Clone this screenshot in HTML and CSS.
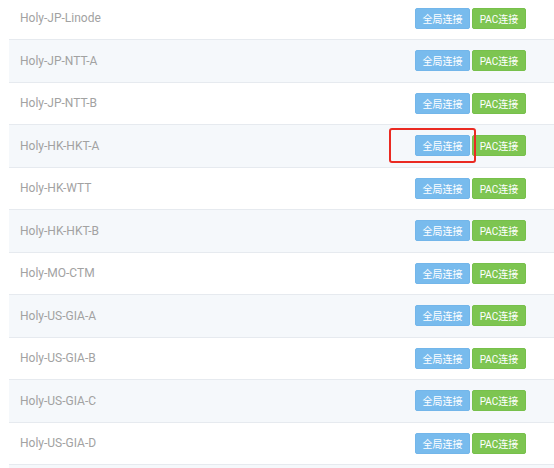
FILE: index.html
```html
<!DOCTYPE html>
<html>
<head>
<meta charset="utf-8">
<link rel="stylesheet" href="styles.css">
</head>
<body>
<div class="table">
  <div class="row"><span class="name">Holy-JP-Linode</span><span class="actions"><a class="btn btn-global">全局连接</a><a class="btn btn-pac">PAC连接</a></span></div>
  <div class="row"><span class="name">Holy-JP-NTT-A</span><span class="actions"><a class="btn btn-global">全局连接</a><a class="btn btn-pac">PAC连接</a></span></div>
  <div class="row"><span class="name">Holy-JP-NTT-B</span><span class="actions"><a class="btn btn-global">全局连接</a><a class="btn btn-pac">PAC连接</a></span></div>
  <div class="row"><span class="name">Holy-HK-HKT-A</span><span class="actions"><span class="mark"></span><a class="btn btn-global">全局连接</a><a class="btn btn-pac">PAC连接</a></span></div>
  <div class="row"><span class="name">Holy-HK-WTT</span><span class="actions"><a class="btn btn-global">全局连接</a><a class="btn btn-pac">PAC连接</a></span></div>
  <div class="row"><span class="name">Holy-HK-HKT-B</span><span class="actions"><a class="btn btn-global">全局连接</a><a class="btn btn-pac">PAC连接</a></span></div>
  <div class="row"><span class="name">Holy-MO-CTM</span><span class="actions"><a class="btn btn-global">全局连接</a><a class="btn btn-pac">PAC连接</a></span></div>
  <div class="row"><span class="name">Holy-US-GIA-A</span><span class="actions"><a class="btn btn-global">全局连接</a><a class="btn btn-pac">PAC连接</a></span></div>
  <div class="row"><span class="name">Holy-US-GIA-B</span><span class="actions"><a class="btn btn-global">全局连接</a><a class="btn btn-pac">PAC连接</a></span></div>
  <div class="row"><span class="name">Holy-US-GIA-C</span><span class="actions"><a class="btn btn-global">全局连接</a><a class="btn btn-pac">PAC连接</a></span></div>
  <div class="row"><span class="name">Holy-US-GIA-D</span><span class="actions"><a class="btn btn-global">全局连接</a><a class="btn btn-pac">PAC连接</a></span></div>
  <div class="row"></div>
</div>
</body>
</html>
```

FILE: styles.css
```css
html, body {
  margin: 0;
  padding: 0;
  background: #ffffff;
  overflow: hidden;
}
body {
  font-family: Roboto, "Liberation Sans", Arial, "Noto Sans CJK SC", sans-serif;
  width: 554px;
  height: 468px;
}
.table {
  margin-left: 9px;
  margin-top: -3.5px;
  width: 560px;
}
.row {
  box-sizing: border-box;
  height: 42.5px;
  border-top: 1px solid #e6eaef;
  display: flex;
  align-items: center;
  justify-content: space-between;
  padding-left: 11px;
  padding-right: 43px;
}
.row:nth-child(even) {
  background: #f5f8fb;
}
.name {
  font-size: 12px;
  color: #a2a2a2;
}
.actions {
  position: relative;
  display: flex;
  gap: 2px;
}
.btn {
  display: flex;
  align-items: center;
  justify-content: center;
  height: 21px;
  box-sizing: border-box;
  border-radius: 2px;
  color: #ffffff;
  font-size: 10px;
  font-family: Roboto, "Liberation Sans", Arial, "Noto Sans CJK SC", sans-serif;
}
.btn-global {
  width: 55px;
  background: #78bbed;
  border: 1px solid #73b6ea;
}
.btn-pac {
  width: 54px;
  background: #7dc551;
  border: 1px solid #77c04b;
}
.mark {
  position: absolute;
  left: -26px;
  top: -7px;
  width: 87px;
  height: 35px;
  box-sizing: border-box;
  border: 2px solid #ea2a22;
  border-radius: 3px;
}
```
